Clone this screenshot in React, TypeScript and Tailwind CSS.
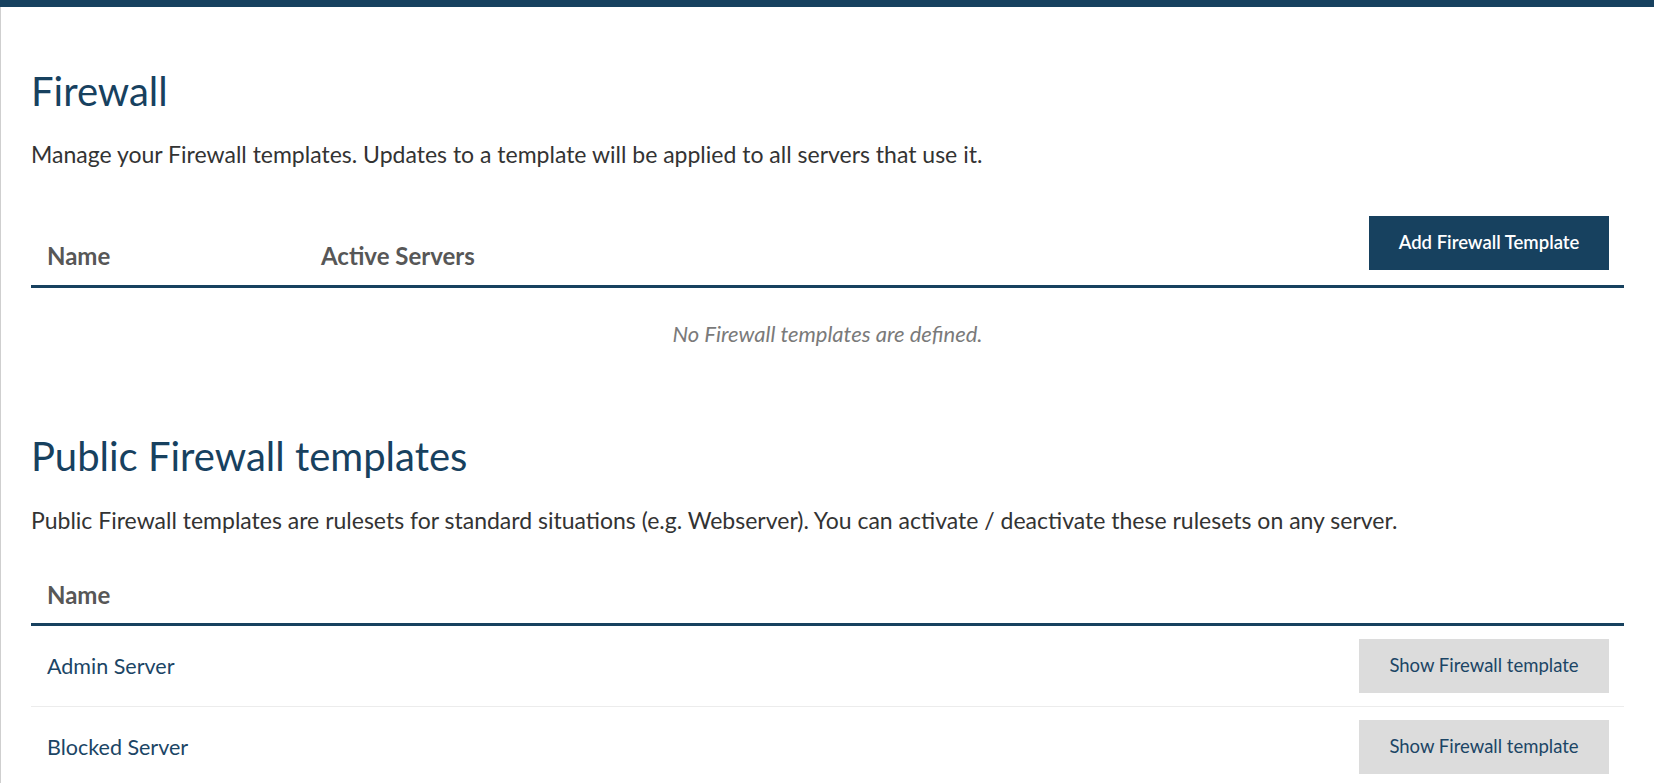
import React from "react";

const publicTemplates = [
  { id: "admin", name: "Admin Server" },
  { id: "blocked", name: "Blocked Server" },
];

export default function App() {
  return (
    <div className="min-h-screen bg-white font-['Lato','Noto_Sans',sans-serif]">
      <div className="h-[7px] bg-[#17415f]" />

      <main className="border-l border-[#cfcfcf] pl-[30px] pr-[30px] pt-[60px] pb-10">
        {/* Own templates */}
        <section>
          <h1 className="text-[40px] leading-[48px] text-[#17415f] mb-[24px]">Firewall</h1>
          <p className="text-[23px] leading-[30px] text-[#333333]">
            Manage your Firewall templates. Updates to a template will be applied to all servers that use it.
          </p>

          <div className="mt-[47px] flex items-end border-b-[3px] border-[#17415f] pb-[15px] pr-[15px]">
            <div className="w-[274px] pl-[16px] text-[24px] leading-[28px] font-bold text-[#575757]">Name</div>
            <div className="flex-1 pl-[16px] text-[24px] leading-[28px] font-bold text-[#575757]">Active Servers</div>
            <button className="h-[54px] w-[240px] bg-[#17415f] text-[18.5px] font-semibold text-white">
              Add Firewall Template
            </button>
          </div>

          <p className="pt-[32px] text-center text-[22px] leading-[28px] italic text-[#7a7a7a]">
            No Firewall templates are defined.
          </p>
        </section>

        {/* Public templates */}
        <section className="mt-[84px]">
          <h2 className="text-[40px] leading-[48px] text-[#17415f] mb-[25px]">Public Firewall templates</h2>
          <p className="text-[23px] leading-[30px] text-[#333333]">
            Public Firewall templates are rulesets for standard situations (e.g. Webserver). You can activate / deactivate these rulesets on any server.
          </p>

          <div className="mt-[46px] border-b-[3px] border-[#17415f] pb-[14px]">
            <div className="pl-[16px] text-[24px] leading-[28px] font-bold text-[#575757]">Name</div>
          </div>

          {publicTemplates.map((t) => (
            <div key={t.id} className="flex items-center border-b border-[#ececec] py-[13px] pr-[15px]">
              <div className="flex-1 pl-[16px] text-[21.5px] leading-[28px] text-[#1b4565]">{t.name}</div>
              <button className="h-[54px] w-[250px] bg-[#dcdcdc] text-[18.5px] text-[#1b4565]">
                Show Firewall template
              </button>
            </div>
          ))}
        </section>
      </main>
    </div>
  );
}
